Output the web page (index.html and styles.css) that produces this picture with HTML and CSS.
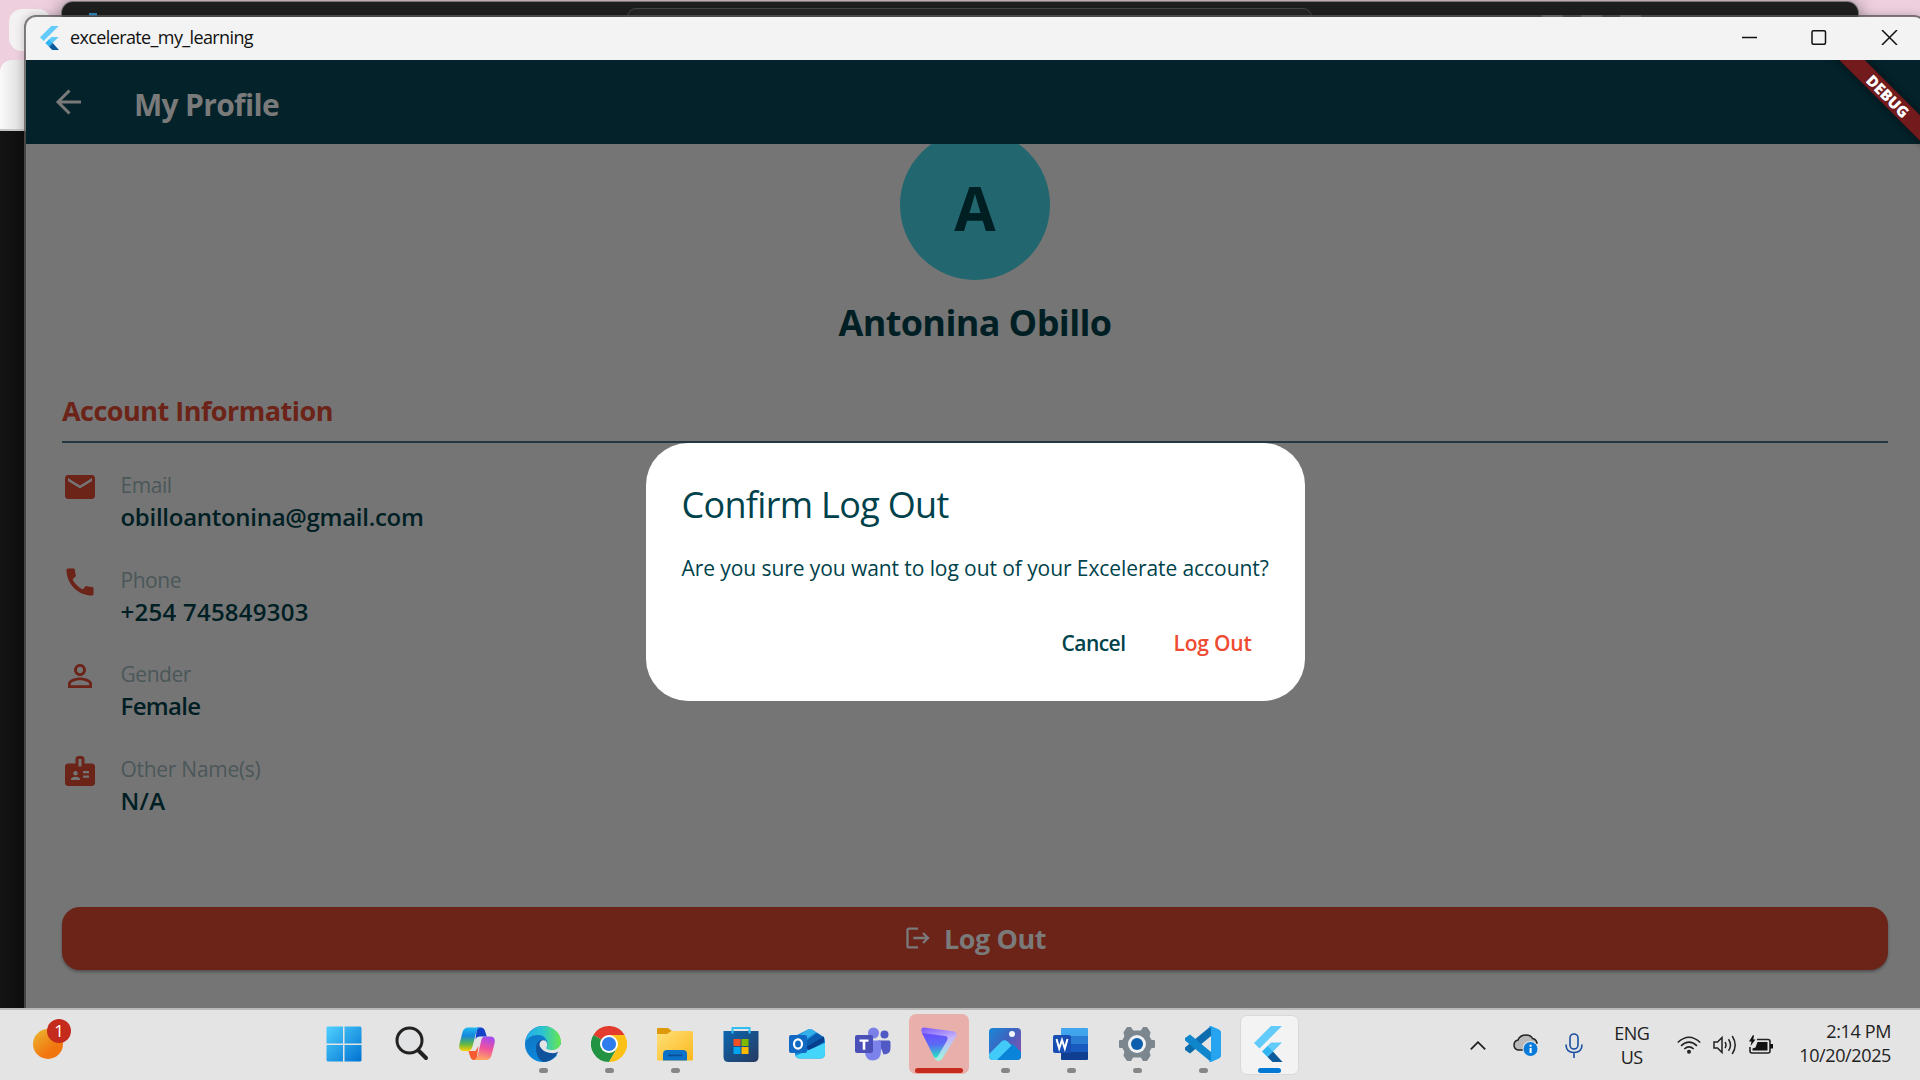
FILE: index.html
```html
<!DOCTYPE html>
<html lang="en">
<head>
<meta charset="utf-8">
<title>excelerate_my_learning</title>
<link rel="stylesheet" href="styles.css">
</head>
<body>
<svg class="defs" width="0" height="0">
  <symbol id="flutter" viewBox="0 0 36 36">
    <path fill="#62cbf9" d="M20 0h11L8.500 22.500 3 17z"/>
    <path fill="#62cbf9" d="M20 16.500h11l-9.500 9.500-5.500-5.500z"/>
    <path fill="#2fb5f4" d="M11 25.500l5.500-5.500 5.500 5.500-5.500 5.500z"/>
    <path fill="#0a5a9c" d="M16.500 31l5.500-5.500L31.500 36H21.500z"/>
  </symbol>
</svg>
<div class="desktop">
  <div class="back-pill"></div>
  <div class="back-tab"></div>
  <div class="back-page"></div>
  <div class="editor"><div class="editor-search"></div><i class="ed-btn b1"></i><i class="ed-btn b2"></i><i class="ed-btn b3"></i><i class="ed-logo"></i></div>

  <main class="window">
    <header class="titlebar">
      <svg class="app-icon" viewBox="0 0 36 36"><use href="#flutter"/></svg>
      <span class="t win-title">excelerate_my_learning</span>
      <svg class="win-controls" width="156" height="15" viewBox="0 0 156 15" fill="none" stroke="#111" stroke-width="1.500">
        <path d="M0 7.500h15"/><rect x="70" y=".8" width="13.500" height="13.500" rx="1.500"/><path d="M140 0l15 15M155 0l-15 15"/>
      </svg>
    </header>
    <div class="app">
      <div class="appbar">
        <svg class="back" width="26" height="26" viewBox="0 0 26 26" fill="none" stroke="#797979" stroke-width="3"><path d="M26 13H3M14.500 1.500L3 13l11.500 11.500"/></svg>
        <h1 class="t app-title">My Profile</h1>
      </div>
      <div class="content">
        <div class="avatar"><span class="t">A</span></div>
        <h2 class="t name">Antonina Obillo</h2>
        <section class="account">
          <h3 class="t section-title">Account Information</h3>
          <div class="row">
            <svg viewBox="0 0 24 24"><path d="M20 4H4c-1.100 0-1.990.9-1.990 2L2 18c0 1.100.9 2 2 2h16c1.100 0 2-.9 2-2V6c0-1.100-.9-2-2-2zm0 4l-8 5-8-5V6l8 5 8-5v2z"/></svg>
            <div class="field"><span class="t label">Email</span><span class="t value email">obilloantonina@gmail.com</span></div>
          </div>
          <div class="row">
            <svg viewBox="0 0 24 24"><path d="M20.010 15.380c-1.230 0-2.420-.2-3.530-.56-.35-.12-.74-.03-1.010.24l-1.570 1.970c-2.830-1.350-5.480-3.900-6.890-6.830l1.950-1.660c.27-.28.35-.67.24-1.020-.37-1.110-.56-2.300-.56-3.530 0-.54-.45-.99-.99-.99H4.190C3.650 3 3 3.240 3 3.990 3 13.280 10.730 21 20.010 21c.71 0 .99-.63.99-1.180v-3.450c0-.54-.45-.99-.99-.99z"/></svg>
            <div class="field"><span class="t label">Phone</span><span class="t value phone">+254 745849303</span></div>
          </div>
          <div class="row">
            <svg viewBox="0 0 24 24"><path d="M12 5.900c1.160 0 2.100.94 2.100 2.100s-.94 2.100-2.100 2.100S9.900 9.160 9.900 8s.94-2.100 2.100-2.100m0 9c2.970 0 6.100 1.460 6.100 2.100v1.100H5.900V17c0-.64 3.130-2.100 6.100-2.100M12 4C9.790 4 8 5.790 8 8s1.790 4 4 4 4-1.790 4-4-1.790-4-4-4zm0 9c-2.670 0-8 1.340-8 4v3h16v-3c0-2.660-5.330-4-8-4z"/></svg>
            <div class="field"><span class="t label">Gender</span><span class="t value female">Female</span></div>
          </div>
          <div class="row">
            <svg viewBox="0 0 24 24"><path d="M20 7h-5V4c0-1.100-.9-2-2-2h-2c-1.100 0-2 .9-2 2v3H4c-1.100 0-2 .9-2 2v11c0 1.100.9 2 2 2h16c1.100 0 2-.9 2-2V9c0-1.100-.9-2-2-2zM9 12c.83 0 1.500.67 1.500 1.500S9.830 15 9 15s-1.500-.67-1.500-1.500S8.170 12 9 12zm3 6H6v-.75c0-1 2-1.500 3-1.500s3 .5 3 1.500V18zm1-9h-2V4h2v5zm5 7.500h-4V15h4v1.500zm0-3h-4V12h4v1.500z"/></svg>
            <div class="field"><span class="t label names">Other Name(s)</span><span class="t value na">N/A</span></div>
          </div>
        </section>
        <button class="logout">
          <svg width="28" height="28" viewBox="0 0 24 24"><path d="M17 7l-1.410 1.410L18.170 11H8v2h10.170l-2.580 2.580L17 17l5-5zM4 5h8V3H4c-1.100 0-2 .9-2 2v14c0 1.100.9 2 2 2h8v-2H4V5z"/></svg>
          <span class="t">Log Out</span>
        </button>
      </div>
      <div class="debug"><span class="t">DEBUG</span></div>
      <div class="dialog">
        <h2 class="t dialog-title">Confirm Log Out</h2>
        <p class="t dialog-text">Are you sure you want to log out of your Excelerate account?</p>
        <div class="actions"><span class="t cancel">Cancel</span><span class="t confirm">Log Out</span></div>
      </div>
    </div>
  </main>

  <footer class="taskbar">
    <div class="weather"><i class="sun"></i><span class="badge">1</span></div>
    <div class="apps">
      <div class="slot start"><svg viewBox="0 0 36 36"><defs><linearGradient id="win" x1="0" y1="0" x2="1" y2="1" gradientUnits="objectBoundingBox"><stop stop-color="#4fd0ff"/><stop offset="1" stop-color="#0072d0"/></linearGradient></defs><path fill="url(#win)" d="M1.500.5h15.500v17H.5V1.500zM18.500.5h16l1 1v16h-17zM.5 19h16.500v16.500H1.500l-1-1zM18.500 19h17v15.500l-1 1h-16z"/></svg></div>
      <div class="slot"><svg viewBox="0 0 36 36" fill="none" stroke="#222"><circle cx="16.500" cy="14.500" r="12.500" stroke-width="3" fill="#e0e2e3"/><path d="M25.500 24.500l7.500 7.500" stroke-width="4" stroke-linecap="round"/></svg></div>
      <div class="slot"><svg viewBox="0 0 36 36"><defs><linearGradient id="cp1" x1="0" y1="0" x2="0" y2="1"><stop stop-color="#20b8f0"/><stop offset=".35" stop-color="#1387dc"/><stop offset=".7" stop-color="#60b848"/><stop offset="1" stop-color="#ffd000"/></linearGradient><linearGradient id="cp2" x1=".6" y1="0" x2=".4" y2="1"><stop stop-color="#a34bf0"/><stop offset=".5" stop-color="#f0529c"/><stop offset="1" stop-color="#ffa860"/></linearGradient></defs><path fill="#1540c8" d="M18 1.500h4q3 0 4 3.500l1.800 5.500H21q-3.500 0-4.500 3z"/><path fill="#f75b30" d="M9.500 25h7l3-5-2 14h-2.500q-3 0-4-4z"/><path fill="url(#cp1)" d="M9 1.500h11.500Q18 3 17 7l-3.500 13.500q-1.200 4.500-5 4.500H5Q-1 25 .5 18l3-12Q5 1.500 9 1.500z"/><path fill="url(#cp2)" d="M26 10.500h5q6 0 4.500 7l-3 12Q31 34 27 34H15.500q2.500-1.500 3.500-5.500l3.200-14q1-4 3.800-4z"/></svg></div>
      <div class="slot run"><svg viewBox="0 0 36 36"><defs><linearGradient id="ed1"><stop stop-color="#24a9ed"/><stop offset=".5" stop-color="#2cc4cf"/><stop offset="1" stop-color="#69e84b"/></linearGradient><linearGradient id="ed2" x1="0" y1="0" x2=".5" y2="1"><stop stop-color="#106fba"/><stop offset="1" stop-color="#0b8be0"/></linearGradient></defs><circle cx="18" cy="18" r="18" fill="url(#ed2)"/><path fill="#e4e4e4" d="M20 24l17-6v9l-3 3z"/><path fill="url(#ed1)" d="M0 17C1 7 9 0 18 0c11 0 18 8 18 15.500 0 6-4.500 8.500-9 8.500-4 0-6.500-1.500-5.500-3 2-3 1-9-5-11.500C10 7.500 2 11 0 17z"/><path fill="#10529c" d="M11 22c0-6 4-9 8-8-5 5 0 13 7 13 3 0 5-.8 7.500-1.500C30 32 24 36 18.500 36 14 34.500 11 28 11 22z"/><path fill="#e4e4e4" d="M14.500 19c0-4 3-5.800 6-4.300 3 3 1 6 1 7.200 0 2 3 3 7 2.800 3-.2 5-1 6.500-2.500l-1.500 3.500c-2 1-5 1.800-8 1.300-6-.8-10-4-11-8z"/></svg></div>
      <div class="slot run"><svg viewBox="0 0 36 36"><path fill="#e33b2e" d="M18 18L2.400 9a18 18 0 0 1 31.200 0z"/><path fill="#229342" d="M18 18L2.400 9A18 18 0 0 0 18 36l7.800-13.500z"/><path fill="#fbc116" d="M18 9h15.600A18 18 0 0 1 18 36l7.800-13.500z"/><circle cx="18" cy="18" r="9" fill="#fff"/><circle cx="18" cy="18" r="7.100" fill="#2f7ced"/></svg></div>
      <div class="slot run"><svg viewBox="0 0 36 36"><defs><linearGradient id="fo" x1="0" y1="0" x2="1" y2="1"><stop stop-color="#ffe07a"/><stop offset="1" stop-color="#fbb81c"/></linearGradient></defs><path fill="#dc9a0b" d="M0 3q0-1 1-1h10l4 3-3 4H0z"/><path fill="url(#fo)" d="M0 8h10l4.500-3H35l1 1v27.500q0 1-1 1H1q-1 0-1-1z"/><path fill="#0c72c8" d="M6 34.500V28q0-4 4-4h16q4 0 4 4v6.500z"/><path fill="#0a4d94" d="M11 28.500h14v1.800H11z"/></svg></div>
      <div class="slot"><svg viewBox="0 0 36 36"><defs><linearGradient id="st" x1="0" y1="0" x2="1" y2="1"><stop stop-color="#0b66b0"/><stop offset="1" stop-color="#273a60"/></linearGradient></defs><path fill="url(#st)" d="M.5 5h35v26q0 5-5 5h-25q-5 0-5-5z"/><path fill="none" stroke="#31bdf1" stroke-width="2" d="M9.500 7.500V2h17v5.500"/><path fill="#f25022" d="M10.500 13h7v7h-7z"/><path fill="#7fba00" d="M18.500 13h7v7h-7z"/><path fill="#00a4ef" d="M10.500 21h7v7h-7z"/><path fill="#ffb900" d="M18.500 21h7v7h-7z"/></svg></div>
      <div class="slot"><svg viewBox="0 0 36 36"><path fill="#1288d8" d="M6 10L19 3.500Q21 2.500 23 3.500l11 7q2 1.500 2 4v13q0 5-5 5H11q-5 0-5-5z"/><path fill="#34b0ea" d="M8 11L19 3.500Q21 2.500 23 3.500l4 3L14 15z"/><path fill="#0b5cae" d="M14 17L28 7l6 4-16 12z"/><path fill="#073f8c" d="M17 21L35 10.500V16L20 25z"/><path fill="#43d5fa" d="M6 30l30-13v10.500q0 5-5 5H10z"/><rect y="9" width="18" height="18" rx="2" fill="#1169c4"/><ellipse cx="9" cy="18" rx="4" ry="4.700" fill="none" stroke="#fff" stroke-width="2.200"/></svg></div>
      <div class="slot"><svg viewBox="0 0 36 36"><circle cx="29.500" cy="8.500" r="4" fill="#5159c4"/><path fill="#5159c4" d="M23 14.500h11q1.500 0 1.500 2V22q0 6.500-7 6.500z"/><circle cx="18.500" cy="7" r="5.500" fill="#7a80e8"/><path fill="#7b83eb" d="M10 14.500h14.500q1.500 0 1.500 2V25q0 9-8 9.500-8 0-8-9z"/><rect y="9" width="18" height="18" rx="2" fill="#4a50b8"/><path fill="#fff" d="M4.500 13.500h9v2.300h-3.200v8H7.700v-8H4.500z"/></svg></div>
      <div class="slot vpn"><svg viewBox="0 0 36 36"><defs><linearGradient id="vp" x1=".3" y1="0" x2=".4" y2="1"><stop stop-color="#6a4bff"/><stop offset=".5" stop-color="#5b6cf4"/><stop offset="1" stop-color="#26dfc3"/></linearGradient><linearGradient id="vq" x1=".1" y1="0" x2=".4" y2="1"><stop stop-color="#7d5cff"/><stop offset=".5" stop-color="#c6b6fa"/><stop offset="1" stop-color="#9bf3df"/></linearGradient></defs><path fill="url(#vq)" d="M3 1.500l29 3.700q5 1 3 5.500L21 33q-3.500 4-7 0L.6 6Q-.5 1.500 3 1.500z"/><path fill="url(#vp)" d="M1 7l23 3q4 .5 2 4.500L17 30q-2 2.500-4 1z"/></svg></div>
      <div class="slot run"><svg viewBox="0 0 36 36"><defs><linearGradient id="ph" x1="0" y1="0" x2="1" y2=".8"><stop stop-color="#1789d8"/><stop offset=".5" stop-color="#3e64bf"/><stop offset="1" stop-color="#8a50b0"/></linearGradient></defs><rect x="2" y="2" width="32" height="32" rx="4" fill="url(#ph)"/><path fill="#0a84d8" d="M8 34l15-15q2-1.500 4 0l7 7v4q0 4-4 4z"/><path fill="#42caf8" d="M2 28l12.500-12.500q3-2.500 6 0l4 4L10 34H6q-4 0-4-4z"/><circle cx="25" cy="8" r="3" fill="#f4f4ff"/></svg></div>
      <div class="slot run"><svg viewBox="0 0 36 36"><path fill="#41a5ee" d="M9 2h25q1 0 1 1v7H8V3q0-1 1-1z"/><path fill="#2b7cd3" d="M8 10h27v8H8z"/><path fill="#185abd" d="M8 18h27v8H8z"/><path fill="#103f91" d="M8 26h27v7q0 1-1 1H9q-1 0-1-1z"/><rect y="9" width="18" height="18" rx="2" fill="#184eb4"/><path fill="none" stroke="#fff" stroke-width="2" d="M3.500 13l2.700 9.500L9 14l2.800 8.500L14.500 13"/></svg></div>
      <div class="slot run"><svg viewBox="0 0 36 36"><path fill="#7c868e" stroke="#7c868e" stroke-width="2" stroke-linejoin="round" d="M8.500 2h3l2 3.500h9l2-3.500h3l3 4.500-1 4 2.500 4.500h3v6h-3L29.500 25.500l1 4-3 4.500h-3l-2-3.500h-9l-2 3.500h-3l-3-4.500 1-4L4 21H1v-6h3l2.500-4.500-1-4z"/><circle cx="18" cy="18" r="9" fill="#eef2f5"/><circle cx="18" cy="18" r="6" fill="#0d5fad"/></svg></div>
      <div class="slot run"><svg viewBox="0 0 36 36"><path fill="#0c6dae" d="M26 0v10L5 27.500 0 24q-1-1.500 0-2.500z"/><path fill="#0f86cc" d="M26 36V26L5 8.500 0 12q-1 1.500 0 2.500z"/><path fill="#27a4f0" d="M26 0l8 3.500q2 1 2 3v23q0 2-2 3L26 36q-1 .3-2-1l2-1V2l-2-1q1-1.300 2-1z"/></svg></div>
      <div class="slot active"><svg viewBox="0 0 36 36"><use href="#flutter"/></svg></div>
    </div>
    <div class="tray">
      <svg class="chev" width="16" height="9" viewBox="0 0 16 9" fill="none" stroke="#222" stroke-width="1.800"><path d="M.8 8.300L8 1.200l7.200 7.100"/></svg>
      <svg class="cloud" width="26" height="24" viewBox="0 0 26 24"><path d="M5 17q-4-1-4-5 0-4 4-5 2-5 8-5 5 0 6.500 3.500Q23 6 24 10l-8 7z" fill="#b9b9b9" stroke="#222" stroke-width="1.500"/><circle cx="17.500" cy="16" r="8" fill="#e4e4e4"/><circle cx="17.500" cy="16" r="7" fill="#0a7bd8"/><path d="M16.600 15h2v5h-2zM16.600 11.800h2v2h-2z" fill="#fff"/></svg>
      <svg class="mic" width="18" height="25" viewBox="0 0 18 25" fill="none" stroke="#1a4fa0" stroke-width="1.600"><rect x="5" y="1" width="8" height="15" rx="4"/><path d="M1 11.500q0 8 8 8t8-8M9 19.500V25"/></svg>
      <div class="lang"><span class="t">ENG</span><span class="t">US</span></div>
      <svg class="wifi" width="24" height="18" viewBox="0 0 24 18" fill="none" stroke="#222" stroke-width="1.600"><path d="M.8 6.500q11.200-10.500 22.400 0M4 9.800q8-7.300 16 0M7.300 13q4.700-4.200 9.400 0"/><circle cx="12" cy="15.800" r="2" fill="#222" stroke="none"/></svg>
      <svg class="vol" width="25" height="20" viewBox="0 0 25 20" fill="none" stroke="#222" stroke-width="1.500"><path d="M1 7h3.500L9 2.500v15L4.500 13H1zM12 7q2 3 0 6M15.500 4.200q4 5.800 0 11.600M19.200 1q6 9 0 18"/></svg>
      <svg class="bat" width="25" height="20" viewBox="0 0 25 20"><path d="M8 4.500h11q2 0 2 2V16q0 2-2 2H3q-2 0-2-2v-4" fill="none" stroke="#222" stroke-width="1.600"/><path d="M8.500 7h10v8.500h-15v-2l3-1zM21 9h3v4.500h-3zM4 0L0 6.500h2.500L1.500 11l5-6.500H4.300L5 .5z" fill="#111"/></svg>
      <div class="clock"><span class="t">2:14 PM</span><span class="t">10/20/2025</span></div>
    </div>
  </footer>
</div>
</body>
</html>
```

FILE: styles.css
```css
* { box-sizing: border-box; margin: 0; padding: 0; }
body { width: 1920px; height: 1080px; overflow: hidden; font-family: "Open Sans", "Noto Sans", sans-serif; }
.t { white-space: nowrap; }
.defs { position: absolute; }
svg { display: block; flex: none; }

/* desktop and the windows behind */
.desktop { position: relative; width: 1920px; height: 1080px; overflow: hidden; background: #edcfde; }
.back-pill { position: absolute; left: 9px; top: 9px; width: 42px; height: 42px; border-radius: 13px; background: #f3f1f2; }
.back-tab { position: absolute; left: 0; top: 60px; width: 50px; height: 71px; border-top-left-radius: 12px; background: linear-gradient(90deg, #fafafa, #d8d8d8 26px); border-bottom: 2px solid #c4c4c4; }
.back-page { position: absolute; left: 0; top: 131px; width: 30px; height: 880px; background: linear-gradient(90deg, #141414, #0e0e0e 24px); }
.editor { position: absolute; left: 62px; top: 2px; width: 1796px; height: 60px; border-radius: 11px; background: #1e1e1e; box-shadow: 0 0 0 1px #777, 0 0 16px 2px rgba(0, 0, 0, .35); }
.editor-search { position: absolute; left: 565px; top: 6px; width: 685px; height: 32px; border: 1px solid #454545; border-radius: 9px; background: #262626; }
.ed-btn { position: absolute; top: 13px; width: 21px; height: 2px; background: #888; }
.b1 { left: 1480px; }
.b2 { left: 1519px; }
.b3 { left: 1558px; }
.ed-logo { position: absolute; left: 27px; top: 11px; width: 8px; height: 3px; background: #2a89bd; }

/* application window */
.window { position: absolute; left: 24px; top: 15px; width: 1902px; height: 1070px; border: 2px solid rgba(90, 86, 86, .75); border-radius: 12px 12px 0 0; overflow: hidden; background: #757575; background-clip: padding-box; box-shadow: 0 0 10px rgba(0, 0, 0, .2); }
.titlebar { display: flex; align-items: center; height: 43px; background: #f3f3f3; padding-left: 12px; }
.app-icon { width: 24px; height: 24px; margin-top: -2px; }
.win-title { font-size: 18px; letter-spacing: -.62px; margin-left: 8px; margin-top: -3px; color: #111; }
.win-controls { margin-left: auto; margin-right: 26px; margin-top: -2px; }
.app { position: relative; height: 1024px; overflow: hidden; }
.appbar { display: flex; align-items: center; height: 84px; background: #03222a; padding-left: 29px; }
.back { margin-right: 53px; }
.app-title { font-size: 30px; font-weight: 700; letter-spacing: -.68px; line-height: 40px; color: #7a7a7a; margin-top: 6px; }
.content { display: flex; flex-direction: column; height: 864px; overflow: hidden; padding: 0 36px; background: #757575; }
.avatar { display: flex; justify-content: center; align-self: center; width: 150px; height: 150px; flex: none; margin-top: -14px; border-radius: 50%; background: #22676f; color: #001f22; font-size: 60px; font-weight: 700; line-height: 157px; }
.name { align-self: center; margin-top: 18px; font-size: 36px; font-weight: 700; letter-spacing: -.63px; line-height: 50px; color: #001f24; }
.account { margin-top: 43px; }
.section-title { display: block; font-size: 27px; font-weight: 700; letter-spacing: -.51px; line-height: 40px; color: #6c2318; padding-bottom: 10px; border-bottom: 2px solid #22383e; margin-bottom: 26px; }
.row { display: flex; height: 94.670px; }
.row svg { width: 36px; height: 36px; fill: #6c2318; margin-right: 22.500px; }
.field { display: flex; flex-direction: column; align-items: flex-start; padding-top: 2px; }
.label { font-size: 21px; letter-spacing: -.45px; line-height: 28px; color: #4b5759; }
.names { letter-spacing: -.28px; }
.value { font-size: 24px; font-weight: 600; letter-spacing: -.28px; line-height: 35px; color: #001f24; }
.phone, .na { letter-spacing: .26px; }
.female { letter-spacing: -.66px; }
.logout { display: flex; align-items: center; justify-content: center; flex: none; margin-top: 59px; height: 63px; border: 0; border-radius: 18px; background: #6c2318; color: #7a7a7a; font: 700 27px/36px "Open Sans", sans-serif; letter-spacing: -.46px; box-shadow: 0 2px 3px rgba(0, 0, 0, .3); }
.logout svg { fill: #7a7a7a; margin-right: 12px; }
.logout .t { padding-top: 2px; }
.debug { position: absolute; left: 1762px; top: 27px; width: 200px; height: 18px; transform: rotate(45deg); background: #721a1c; color: #fff; display: flex; justify-content: center; font-size: 15.300px; font-weight: 800; letter-spacing: .1px; line-height: 18px; box-shadow: 0 0 9px rgba(0, 0, 0, .5); }
.dialog { position: absolute; left: 619.500px; top: 383px; width: 659px; height: 258px; padding: 37px 36px 0; border-radius: 42px; background: #fff; color: #00424b; }
.dialog-title { font-size: 36px; font-weight: 400; letter-spacing: -.68px; line-height: 50px; }
.dialog-text { font-size: 21px; letter-spacing: -.08px; line-height: 30px; margin-top: 23px; }
.actions { display: flex; justify-content: flex-end; gap: 48px; padding-right: 17px; margin-top: 45px; font-size: 21px; font-weight: 600; line-height: 30px; }
.cancel { letter-spacing: -.54px; }
.confirm { letter-spacing: -.21px; color: #ee4b32; }

/* taskbar */
.taskbar { position: absolute; left: 0; top: 1008px; width: 1920px; height: 72px; display: flex; border-top: 2px solid #b9b9b9; background: #e4e4e4; }
.weather { position: relative; width: 312px; }
.sun { position: absolute; left: 33px; top: 19px; width: 30px; height: 30px; border-radius: 50%; background: linear-gradient(140deg, #eaba32, #f2760f 65%); }
.badge { position: absolute; left: 47px; top: 9px; width: 24px; height: 24px; border-radius: 50%; background: #c42b1c; color: #fff; font-size: 17px; line-height: 23px; text-align: center; }
.apps { display: flex; width: 990px; }
.slot { position: relative; display: flex; justify-content: center; width: 66px; padding-top: 16px; }
.slot svg { position: relative; width: 36px; height: 36px; }
.start { padding-right: 3px; }
.slot.run::after { content: ""; position: absolute; left: 29px; top: 58px; width: 9px; height: 5px; border-radius: 3px; background: #868686; }
.vpn::before { content: ""; position: absolute; left: 3px; top: 4px; width: 60px; height: 60px; border-radius: 7px; background: #e9afaa; }
.vpn::after { content: ""; position: absolute; left: 9px; top: 58px; width: 48px; height: 5px; border-radius: 3px; background: #c42b1c; }
.active::before { content: ""; position: absolute; left: 4px; top: 5px; width: 57px; height: 58px; border: 1px solid #d8d8d8; border-radius: 7px; background: #f3f3f3; }
.active::after { content: ""; position: absolute; left: 22px; top: 58px; width: 23px; height: 5px; border-radius: 3px; background: #0078d4; }
.tray { display: flex; flex: 1; align-items: center; justify-content: flex-end; padding-right: 29px; color: #222; font-size: 18px; line-height: 24px; }
.chev { margin-right: 27px; }
.cloud { margin-right: 26px; }
.mic { margin-right: 31px; }
.lang { display: flex; flex-direction: column; align-items: center; margin-right: 28px; letter-spacing: -.55px; }
.wifi { margin-right: 12px; }
.vol { margin-right: 11px; }
.bat { margin-right: 25px; }
.clock { display: flex; flex-direction: column; align-items: flex-end; margin-top: -4px; letter-spacing: -.38px; }
```
